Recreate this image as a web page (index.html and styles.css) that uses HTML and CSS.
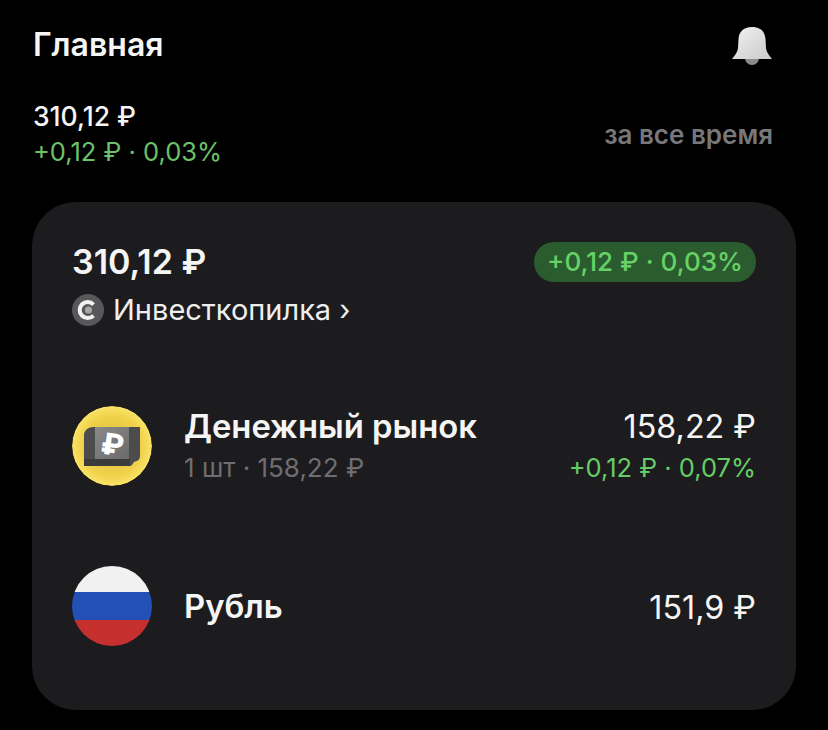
FILE: index.html
```html
<!DOCTYPE html>
<html lang="ru">
<head>
  <meta charset="UTF-8">
  <meta name="viewport" content="width=device-width, initial-scale=1.0">
  <title>Главная</title>
  <link rel="stylesheet" href="styles.css">
</head>
<body>
  <header class="top">
    <h1>Главная</h1>
    <svg class="bell" width="40" height="40" viewBox="0 0 40 40">
      <defs>
        <linearGradient id="bellFill" x1="0" y1="0" x2="1" y2="1">
          <stop offset="0" stop-color="#f2f2f2"/>
          <stop offset="1" stop-color="#c9c9c9"/>
        </linearGradient>
      </defs>
      <circle cx="20" cy="32" r="7" fill="#8a8a8a"/>
      <path d="M20 1C11 1 7 6 6.500 13L6 22C5.800 26 3 29 0 33H40C37 29 34.200 26 34 22L33.500 13C33 6 29 1 20 1Z" fill="url(#bellFill)"/>
    </svg>
  </header>

  <section class="summary">
    <div>
      <div class="summary-value">310,12 ₽</div>
      <div class="summary-profit">+0,12 ₽ · 0,03%</div>
    </div>
    <div class="period">за все время</div>
  </section>

  <main class="card">
    <div class="card-head">
      <div>
        <div class="card-total">310,12 ₽</div>
        <div class="card-name">
          <svg width="32" height="32" viewBox="0 0 32 32">
            <circle cx="16" cy="16" r="16" fill="#58585a"/>
            <path d="M21.500 10.500A8 8 0 1 0 21.500 21.500" fill="none" stroke="#f2f2f2" stroke-width="4"/>
            <circle cx="16.500" cy="16" r="3.500" fill="#a8a8a8"/>
          </svg>
          <span>Инвесткопилка ›</span>
        </div>
      </div>
      <div class="pill">+0,12 ₽ · 0,03%</div>
    </div>

    <div class="row row-money">
      <svg class="row-icon" width="80" height="80" viewBox="0 0 80 80">
        <defs>
          <radialGradient id="coinFill" cx="0.5" cy="0.5" r="0.5">
            <stop offset="0" stop-color="#d8b93a"/>
            <stop offset="0.75" stop-color="#f0d24a"/>
            <stop offset="1" stop-color="#fbe368"/>
          </radialGradient>
          <linearGradient id="coinFace" x1="0" y1="0" x2="1" y2="1">
            <stop offset="0" stop-color="#8a8a8a"/>
            <stop offset="1" stop-color="#6a6a6a"/>
          </linearGradient>
        </defs>
        <circle cx="40" cy="40" r="40" fill="url(#coinFill)"/>
        <path d="M12 29C12 25 16 21 21 21H68V50C68 54 65 55 62 56L60 59C59 60 58 60 56 60H12Z" fill="#4c4c4c"/>
        <path d="M12 53H58V60H12Z" fill="#3b3b3b"/>
        <rect x="23" y="21" width="34" height="32" fill="url(#coinFace)"/>
        <text class="coin-rub" x="40.500" y="49" text-anchor="middle" transform="rotate(8 40 38)">₽</text>
      </svg>
      <div class="row-info">
        <div class="row-title">Денежный рынок</div>
        <div class="row-sub">1 шт · 158,22 ₽</div>
      </div>
      <div class="row-nums">
        <div class="row-value">158,22 ₽</div>
        <div class="row-profit">+0,12 ₽ · 0,07%</div>
      </div>
    </div>

    <div class="row row-rub">
      <div class="flag">
        <div class="flag-white"></div>
        <div class="flag-blue"></div>
        <div class="flag-red"></div>
      </div>
      <div class="row-info">
        <div class="row-title">Рубль</div>
      </div>
      <div class="row-nums">
        <div class="row-value">151,9 ₽</div>
      </div>
    </div>
  </main>
</body>
</html>
```

FILE: styles.css
```css
body {
  font-family: Inter, "Noto Sans", sans-serif;
  margin: 0;
  padding: 0;
  background-color: #000;
  color: #f5f5f5;
  height: 730px;
  overflow: hidden;
}
.top {
  display: flex;
  justify-content: space-between;
  align-items: flex-start;
  padding: 26px 56px 0 33px;
  height: 72px;
  box-sizing: border-box;
}
h1 {
  margin: 1px 0 0;
  font-size: 32px;
  line-height: 36px;
  font-weight: 600;
}
.summary {
  display: flex;
  justify-content: space-between;
  align-items: center;
  padding: 0 55px 6px 33px;
  height: 130px;
  box-sizing: border-box;
}
.summary-value {
  font-size: 26.500px;
  line-height: 36px;
  font-weight: 500;
}
.summary-profit {
  font-size: 25.500px;
  line-height: 36px;
  color: #6cc16a;
}
.period {
  font-size: 26px;
  font-weight: 600;
  color: #78787b;
}
.card {
  margin: 0 32px;
  height: 508px;
  box-sizing: border-box;
  padding: 40px 40px 0;
  background: #1c1c1e;
  border-radius: 44px;
}
.card-head {
  display: flex;
  justify-content: space-between;
  align-items: flex-start;
}
.card-total {
  font-size: 34px;
  line-height: 40px;
  font-weight: 600;
}
.card-name {
  display: flex;
  align-items: center;
  gap: 9px;
  margin-top: 10px;
  font-size: 29px;
  line-height: 36px;
  color: #efeff0;
}
.pill {
  padding: 0 13px;
  height: 40px;
  line-height: 39px;
  border-radius: 20px;
  background: #2b5c30;
  color: #66d266;
  font-size: 26.100px;
  font-weight: 500;
}
.row {
  display: flex;
  align-items: center;
  height: 80px;
}
.row-money {
  margin-top: 78px;
}
.row-rub {
  margin-top: 80px;
}
.row-icon {
  flex: none;
  border-radius: 50%;
}
.coin-rub {
  font-size: 30px;
  font-weight: 800;
  fill: #fff;
}
.flag {
  flex: none;
  width: 80px;
  height: 80px;
  border-radius: 50%;
  overflow: hidden;
  display: flex;
  flex-direction: column;
}
.flag-white {
  height: 26px;
  background: #f1f1f1;
}
.flag-blue {
  height: 28px;
  background: #2250b4;
}
.flag-red {
  height: 26px;
  background: #c5302f;
}
.row-info {
  flex: 1;
  margin-left: 32px;
}
.row-money .row-info {
  padding-top: 2px;
}
.row-title {
  font-size: 32.800px;
  line-height: 40px;
  font-weight: 600;
}
.row-sub {
  margin-top: 2px;
  font-size: 26px;
  line-height: 40px;
  color: #6e6e72;
}
.row-nums {
  padding-top: 3px;
  text-align: right;
}
.row-value {
  font-size: 32.300px;
  line-height: 40px;
}
.row-profit {
  margin-top: 1px;
  font-size: 25.500px;
  line-height: 40px;
  color: #66cc66;
}
```
